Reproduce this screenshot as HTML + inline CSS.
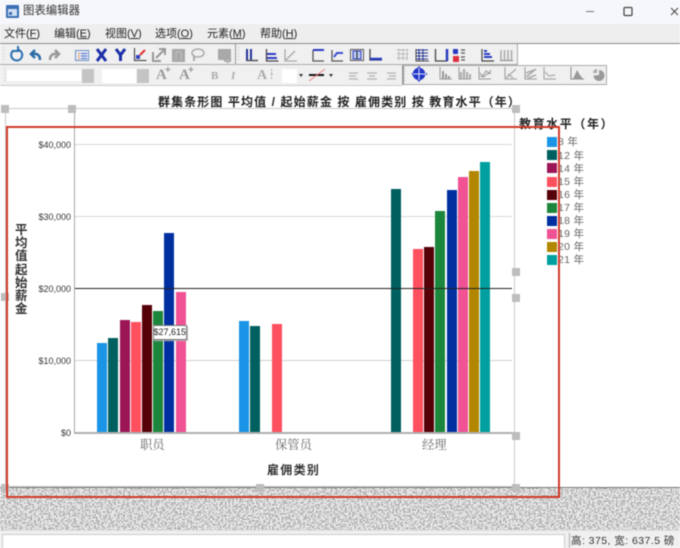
<!DOCTYPE html>
<html><head><meta charset="utf-8">
<style>
html,body{margin:0;padding:0;width:680px;height:548px;overflow:hidden;background:#fff}
#w{position:relative;width:680px;height:548px;overflow:hidden;filter:blur(.55px);font-family:"Liberation Sans","Noto Sans CJK SC",sans-serif}
#w div{position:absolute;white-space:nowrap}
.m{top:27px;font-size:11px;line-height:14px;color:#222}
.y{right:609px;font-size:9px;line-height:10px;color:#333}
.c{font-family:"Liberation Serif","Noto Serif CJK SC",serif;font-size:12.3px;line-height:16px;color:#666;top:437px}
.l{left:558px;font-size:10.5px;line-height:13px;color:#666;letter-spacing:.3px}
.s{left:547px;width:10px;height:10px}
.h{width:8px;height:8px;background:#bdbdbd}
</style></head><body><div id="w">
<div style="left:0;top:0;width:680px;height:24px;background:#f6f7fb"></div>
<svg style="position:absolute;left:6px;top:5px" width="13" height="13"><rect width="13" height="13" rx="1" fill="#3c6fb5"/><rect x="2" y="4" width="9" height="7" fill="#cfe0f4"/><rect x="3" y="7" width="3" height="3" fill="#3c6fb5"/></svg>
<div style="left:23px;top:3px;font-size:11.4px;line-height:17px;color:#333">图表编辑器</div>
<svg style="position:absolute;left:580px;top:4px" width="100" height="16" fill="none" stroke="#444"><path d="M6 7.500H14" stroke="#777"/><rect x="44" y="3.500" width="8" height="8" rx="1" stroke-width="1.200"/><path d="M92 4L99 11M99 4L92 11" stroke-width="1" transform="translate(-1 0)"/></svg>
<div style="left:0;top:24px;width:680px;height:19px;background:#eeeeee"></div>
<div class="m" style="left:4px">文件(<u>F</u>)</div><div class="m" style="left:54px">编辑(<u>E</u>)</div><div class="m" style="left:105px">视图(<u>V</u>)</div><div class="m" style="left:155px">选项(<u>O</u>)</div><div class="m" style="left:207px">元素(<u>M</u>)</div><div class="m" style="left:260px">帮助(<u>H</u>)</div>
<div style="left:0;top:43px;width:680px;height:1px;background:#8a8a8a"></div>
<div style="left:0;top:44px;width:517px;height:20px;background:#f0f0f0;border-right:1px solid #aaa;border-bottom:1px solid #aaa"></div>
<div style="left:0;top:65px;width:402px;height:20px;background:#f0f0f0;border-bottom:1px solid #ccc"></div>
<div style="left:402px;top:65px;width:205px;height:20px;background:#f0f0f0;border:1px solid #aaa;box-sizing:border-box;border-left:2px solid #999"></div>
<div style="left:235px;top:44px;width:1px;height:20px;background:#999"></div>
<div style="left:0;top:64px;width:517px;height:1px;background:#aaa"></div>
<div style="left:7px;top:70px;width:74px;height:11px;background:#fff"></div><div style="left:82px;top:69px;width:12px;height:14px;background:#c4c4c4"></div>
<div style="left:102px;top:69px;width:34px;height:14px;background:#fff"></div><div style="left:137px;top:69px;width:12px;height:14px;background:#c4c4c4"></div>
<div style="left:282px;top:69px;width:15px;height:14px;background:#fff"></div>
<svg style="position:absolute;left:0;top:44px" width="680" height="42" fill="none" stroke-width="2">
<path d="M3.500 3V18M238.500 3V18M5 24V38M404.500 24V38" stroke="#bbb" stroke-width="1" stroke-dasharray="1 2"/>
<path d="M13.500 6.500A5.500 5.500 0 1 0 17 5.500M18 2v5h-5" stroke="#2a6fb0"/>
<path d="M40 16c0-5-3-7-8-6M35 6l-4 4 4 4" stroke="#2a6aa8" stroke-width="2.500"/>
<path d="M50 16c0-5 3-7 8-6M55 6l4 4-4 4" stroke="#999" stroke-width="2.500"/>
<rect x="75.500" y="6.500" width="13" height="10" fill="#e8eef8" stroke="#6a8fc0" stroke-width="1"/><path d="M78 9.500h2M78 12h2M78 14.500h2" stroke="#e08030" stroke-width="1"/><path d="M81 9.500h6M81 12h6M81 14.500h6" stroke="#4060c0" stroke-width="1"/>
<path d="M97 5l9 12M106 5l-9 12" stroke="#1c2fa8" stroke-width="3"/>
<path d="M116 5l4.500 6 4.500-6M120.500 11v6" stroke="#1c2fa8" stroke-width="3"/>
<path d="M134.500 4v12.500h12" stroke="#333" stroke-width="1"/><rect x="136" y="11" width="4" height="4" fill="#3040c0"/><path d="M140 11l5-5" stroke="#e03030"/>
<path d="M153 8v9h8M156 14l8-8M159 5h6v6" stroke="#999"/>
<rect x="172" y="5" width="13" height="13" fill="#a8a8a8"/><path d="M176 8v8M181 8v8M176 8h5" stroke="#c4c4c4" stroke-width="1"/>
<ellipse cx="198" cy="9" rx="6" ry="4" stroke="#aaa" stroke-width="1.500"/><path d="M194 12v5" stroke="#aaa"/>
<rect x="218" y="5" width="13" height="11" fill="#a8a8a8"/><path d="M224 16l4 2 3-2" stroke="#a8a8a8"/>
<g stroke="#2a3a7a"><path d="M247 5v11M251 5v11" stroke="#223399"/><path d="M246 16.500h12" stroke="#555" stroke-width="1.500"/></g>
<path d="M266.500 5v12h12" stroke="#444" stroke-width="1.300"/><path d="M267 10h9" stroke="#2a3ac0"/><path d="M267 14h10" stroke="#2a3ac0"/>
<path d="M285 5v12h12M286 16l9-9" stroke="#aaa" stroke-width="1.300"/>
<path d="M313 6v11h11" stroke="#555" stroke-width="1.300"/><path d="M313 6h11" stroke="#2a3ac0"/>
<path d="M332 6v11h11" stroke="#555" stroke-width="1.300"/><path d="M334 13l3-4h6" stroke="#3a50d0"/>
<rect x="350.500" y="5.500" width="13" height="11" stroke="#555" stroke-width="1"/><rect x="353" y="7" width="8" height="8" fill="#b8c8f0" stroke="#2a3ac0" stroke-width="1"/><path d="M357 7v8" stroke="#222" stroke-width="1"/>
<path d="M370 5v11h12" stroke="#444" stroke-width="1.300"/><path d="M370 15h12" stroke="#2a3ac0" stroke-width="2.500"/>
<path d="M397 6h12M397 10h12M397 14h12M399 5v12M403 5v12M407 5v12" stroke="#aaa" stroke-width="1" stroke-dasharray="2 1"/>
<path d="M416 6h12M416 9h12M416 12h12M416 15h12M419 5v12M423 5v12" stroke="#2a3a90" stroke-width="1"/><path d="M416 5v12h13" stroke="#444" stroke-width="1"/>
<path d="M435.500 5v12h12" stroke="#444" stroke-width="1.300"/><path d="M447 5v12" stroke="#2a3ac0" stroke-width="2.500"/>
<rect x="453" y="5" width="5" height="5" fill="#2a3ac0" stroke="none"/><rect x="453" y="12" width="6" height="6" fill="#e03040" stroke="none"/><path d="M461 6h4M461 9h4M461 13h4M461 16h4" stroke="#555" stroke-width="1.200"/>
<path d="M482 5v12h12" stroke="#444" stroke-width="1.200"/><path d="M484 7h3M484 10h6M484 13h8" stroke="#2a3ac0"/>
<path d="M501 6v10M504.500 6v10M508 6v10M511.500 6v10" stroke="#aaa" stroke-width="1.500"/><path d="M500 16.500h13" stroke="#888" stroke-width="1"/>
<path d="M349 29h9M349 32h7M349 35h9M367 29h10M369 32h6M367 35h10M387 29h9M389 32h7M387 35h9" stroke="#bbb" stroke-width="1.500"/>
<circle cx="419" cy="30" r="5.500" fill="#2436c8" stroke="#2436c8" stroke-width="1.500"/><path d="M413 30h13M419 24v12" stroke="#dfe4ff" stroke-width="1"/><path d="M412 30h1M426 30h1M419 22.500v1.500M419 36v1.500" stroke="#2436c8" stroke-width="2"/>
<path d="M440 23v12h12" stroke="#999" stroke-width="1"/><path d="M443 27v8M446 30v5M449 32v3" stroke="#999" stroke-width="2"/>
<path d="M459 23v12h12" stroke="#999" stroke-width="1"/><path d="M461 28v7M464 25v10M467 28v7M470 30v5" stroke="#aaa" stroke-width="2"/>
<path d="M479 23v12h12" stroke="#999" stroke-width="1"/><path d="M480 29l3 3 3-5 3 2 2-3M480 32l4 1 3-3 4-1" stroke="#999" stroke-width="1"/>
<path d="M505 23v12h12M506 34l10-9M508 30l5 4" stroke="#aaa" stroke-width="1.300"/>
<path d="M525 23v12h12" stroke="#999" stroke-width="1"/><path d="M526 33l10-8M526 29l8-3M528 34l8-3" stroke="#aaa" stroke-width="1.500"/>
<path d="M544 23v12h12M545 28l4 4 6-1" stroke="#aaa" stroke-width="1.200"/>
<path d="M571 23v12h13" stroke="#888" stroke-width="1"/><path d="M573 35l4-9 3 5 3 4z" fill="#999" stroke="none"/>
<path d="M599 31v-5a5.500 5.500 0 1 1-5.500 5.500z" fill="#999" stroke="none"/><path d="M597 29v-4a4 4 0 0 0-4 4z" fill="#aaa" stroke="none"/>
<path d="M303 30l-4 0 2 3zM333 30l-4 0 2 3z" fill="#333" stroke="none"/>
<path d="M309 31h15" stroke="#111" stroke-width="2"/><path d="M309 37l16-12" stroke="#f08080" stroke-width="1"/>
<path d="M271.500 25v2M271.500 29v2M271.500 33v2" stroke="#aaa" stroke-width="1"/><path d="M273 30l-2-2v4z" fill="#aaa" stroke="none"/>
</svg>
<div style="left:156px;top:67px;font:bold 15px 'Liberation Serif',serif;color:#999;line-height:17px">A</div><div style="left:165px;top:65px;font:bold 10px 'Liberation Sans';color:#999;line-height:12px">+</div>
<div style="left:179px;top:67px;font:bold 15px 'Liberation Serif',serif;color:#999;line-height:17px">A</div><div style="left:188px;top:65px;font:bold 10px 'Liberation Sans';color:#999;line-height:12px">+</div>
<div style="left:211px;top:69px;font:bold 11px 'Liberation Serif',serif;color:#aaa;line-height:14px">B</div>
<div style="left:231px;top:69px;font:italic bold 11px 'Liberation Serif',serif;color:#aaa;line-height:14px">I</div>
<div style="left:257px;top:67px;font:bold 14px 'Liberation Serif',serif;color:#aaa;line-height:17px">A</div>

<!-- canvas -->
<svg style="position:absolute;left:0;top:488px" width="680" height="42"><filter id="n" x="0" y="0" width="100%" height="100%"><feTurbulence type="fractalNoise" baseFrequency="0.55" numOctaves="2" seed="4"/><feColorMatrix values="0 0 0 0 .42 0 0 0 0 .42 0 0 0 0 .42 9 0 0 0 -4.200"/></filter><rect width="680" height="42" fill="#ececec"/><rect width="680" height="42" filter="url(#n)"/></svg>
<div style="left:0;top:487px;width:680px;height:1px;background:#777"></div>
<div style="left:0;top:530px;width:680px;height:18px;background:#f0f0f0;border-top:1px solid #ddd;box-sizing:border-box"></div>
<div style="left:2px;top:534px;width:563px;height:14px;background:#fff;border:1px solid #ccc;border-bottom:0;box-sizing:border-box"></div>
<div style="left:569px;top:533px;width:1px;height:15px;background:#aaa"></div>
<div style="left:571px;top:534px;font-size:10.5px;line-height:14px;color:#333;letter-spacing:.45px">高: 375, 宽: 637.5 磅</div>

<!-- title -->
<div style="left:158px;top:95px;font-size:12px;line-height:15px;font-weight:bold;color:#222;letter-spacing:1.1px">群集条形图 平均值 / 起始薪金 按 雇佣类别 按 教育水平（年）</div>

<!-- frame -->
<div style="left:5px;top:108px;width:510px;height:379px;border:1.500px solid #c8c8c8;box-sizing:border-box"></div>
<div style="left:74px;top:108px;width:1px;height:325px;background:#a8a8a8"></div>
<div style="left:75px;top:143.500px;width:437px;height:1px;background:#d8d8d8"></div>
<div style="left:75px;top:215.500px;width:437px;height:1px;background:#d8d8d8"></div>
<div style="left:75px;top:359.500px;width:437px;height:1px;background:#d0d0d0"></div>
<div class="y" style="top:140px">$40,000</div><div class="y" style="top:212px">$30,000</div><div class="y" style="top:284px">$20,000</div><div class="y" style="top:356px">$10,000</div><div class="y" style="top:428px">$0</div>
<div style="left:15px;top:224px;width:13px;font-size:12.500px;line-height:13.200px;font-weight:bold;color:#333;white-space:normal">平均值起始薪金</div>

<!-- bars -->
<div style="left:97px;top:343px;width:10px;height:89px;background:#1a94e6"></div>
<div style="left:108px;top:338px;width:10px;height:94px;background:#006060"></div>
<div style="left:119.500px;top:319.500px;width:10px;height:112.500px;background:#9c1656"></div>
<div style="left:131px;top:322px;width:10px;height:110px;background:#ff5060"></div>
<div style="left:142px;top:305px;width:10px;height:127px;background:#560008"></div>
<div style="left:153px;top:311px;width:10px;height:121px;background:#1c863c"></div>
<div style="left:164px;top:233px;width:10px;height:199px;background:#0030a0"></div>
<div style="left:175.500px;top:291.500px;width:10px;height:140.500px;background:#f05294"></div>
<div style="left:238.500px;top:321px;width:10px;height:111px;background:#1a94e6"></div>
<div style="left:249.500px;top:325.500px;width:10px;height:106.500px;background:#006060"></div>
<div style="left:271.500px;top:323.500px;width:10px;height:108.500px;background:#ff5060"></div>
<div style="left:390.500px;top:188.500px;width:10px;height:243.500px;background:#006060"></div>
<div style="left:413px;top:248.500px;width:10px;height:183.500px;background:#ff5060"></div>
<div style="left:424px;top:247px;width:10px;height:185px;background:#560008"></div>
<div style="left:435px;top:210.500px;width:10px;height:221.500px;background:#1c863c"></div>
<div style="left:446.500px;top:190px;width:10px;height:242px;background:#0030a0"></div>
<div style="left:457.500px;top:177px;width:10px;height:255px;background:#f05294"></div>
<div style="left:468.500px;top:170.500px;width:10px;height:261.500px;background:#b38600"></div>
<div style="left:480px;top:161.500px;width:10px;height:270.500px;background:#00a0a0"></div>
<div style="left:75px;top:287.500px;width:437px;height:1px;background:#222"></div>
<div style="left:74px;top:432px;width:441px;height:1.500px;background:#b0b0b0"></div>
<div style="left:152.500px;top:325px;width:34px;height:14.500px;background:#fff;border:1px solid #777;box-sizing:border-box;font-size:9px;line-height:13px;color:#222;text-align:center;box-shadow:1px 1px 1px #bbb">$27,615</div>
<div class="c" style="left:140px">职员</div><div class="c" style="left:275px">保管员</div><div class="c" style="left:422px">经理</div>
<div style="left:267px;top:463px;font-size:12px;line-height:15px;font-weight:bold;color:#333;letter-spacing:1.300px">雇佣类别</div>

<!-- legend -->
<div style="left:519px;top:117px;font-size:12px;line-height:15px;font-weight:bold;color:#222;letter-spacing:1.600px">教育水平（年）</div>
<div class="s" style="top:137px;background:#1a94e6"></div><div class="s" style="top:150px;background:#006060"></div><div class="s" style="top:163px;background:#9c1656"></div><div class="s" style="top:176.500px;background:#ff5060"></div><div class="s" style="top:189.500px;background:#560008"></div><div class="s" style="top:202.500px;background:#1c863c"></div><div class="s" style="top:215.500px;background:#0030a0"></div><div class="s" style="top:228.500px;background:#f05294"></div><div class="s" style="top:242px;background:#b38600"></div><div class="s" style="top:255px;background:#00a0a0"></div>
<div class="l" style="top:136px">8 年</div><div class="l" style="top:149.500px">12 年</div><div class="l" style="top:162.500px">14 年</div><div class="l" style="top:175.500px">15 年</div><div class="l" style="top:188.500px">16 年</div><div class="l" style="top:201.500px">17 年</div><div class="l" style="top:214.500px">18 年</div><div class="l" style="top:228px">19 年</div><div class="l" style="top:241px">20 年</div><div class="l" style="top:254px">21 年</div>

<!-- handles -->
<div class="h" style="left:1px;top:105px"></div><div class="h" style="left:68px;top:105px"></div><div class="h" style="left:512px;top:105px"></div>
<div class="h" style="left:1px;top:293px"></div><div class="h" style="left:512px;top:268px"></div><div class="h" style="left:512px;top:294px"></div>
<div class="h" style="left:512px;top:432px"></div><div class="h" style="left:1px;top:484px"></div><div class="h" style="left:256px;top:484px"></div><div class="h" style="left:512px;top:484px"></div>

<!-- red rectangle -->
<div style="left:6px;top:126px;width:554px;height:372px;border:2px solid #d23a28;box-sizing:border-box"></div>
</div></body></html>
